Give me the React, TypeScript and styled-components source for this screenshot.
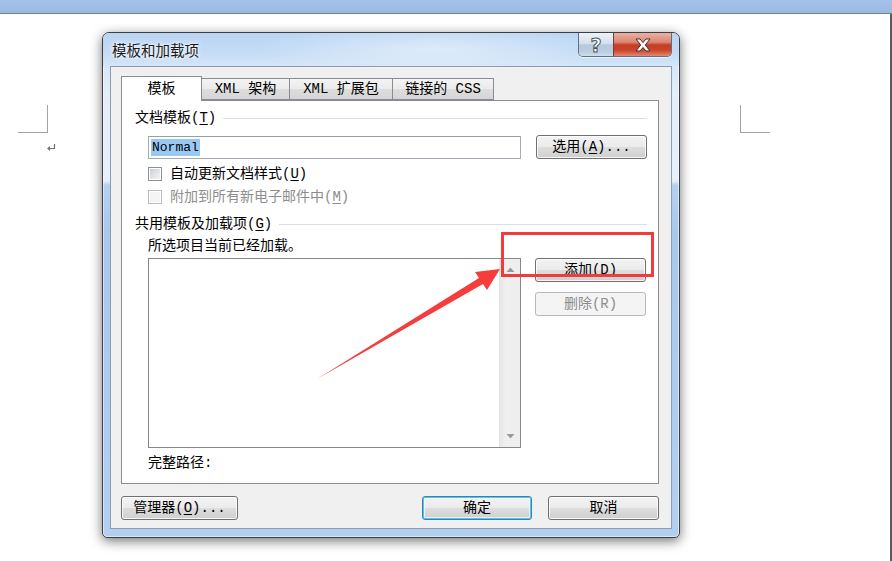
import React from "react";
import styled, { createGlobalStyle } from "styled-components";

const GlobalStyle = createGlobalStyle`
  html, body {
    margin: 0;
    padding: 0;
    background: #ffffff;
    overflow: hidden;
  }
  body {
    font-family: "Liberation Mono", "Noto Sans CJK SC", monospace;
    font-size: 14px;
    color: #000;
  }
  * {
    box-sizing: border-box;
  }
`;

const Screen = styled.div`
  position: relative;
  width: 892px;
  height: 561px;
  display: flex;
  flex-direction: column;
  background: #ffffff;
  overflow: hidden;
`;

const Ribbon = styled.div`
  height: 14px;
  flex: none;
  background: linear-gradient(#a3c1e8, #9bbbe4);
  border-bottom: 1px solid #6f7f96;
`;

const DocArea = styled.div`
  position: relative;
  flex: 1;
  background: #ffffff;
  border-right: 2px solid #525b66;
`;

const CornerMark = styled.div<{ $side: "left" | "right" }>`
  position: absolute;
  top: 91px;
  width: 30px;
  height: 28px;
  left: ${(p) => (p.$side === "left" ? "18px" : "740px")};
  border-bottom: 1px solid #a3a3a3;
  ${(p) =>
    p.$side === "left"
      ? "border-right: 1px solid #a3a3a3;"
      : "border-left: 1px solid #a3a3a3;"}
`;

const ParaMark = styled.svg`
  position: absolute;
  left: 47px;
  top: 130px;
`;

/* ---------- dialog window ---------- */

const Window = styled.div`
  position: absolute;
  left: 102px;
  top: 32px;
  width: 578px;
  height: 506px;
  display: flex;
  flex-direction: column;
  padding: 0 7px 8px 7px;
  border: 1px solid #3b3f45;
  border-radius: 7px 7px 5px 5px;
  background: linear-gradient(
    180deg,
    #bcd7f3 0px,
    #c9dff6 18px,
    #d7e7f8 34px,
    #e3eefa 60px,
    #e6f0fa 148px,
    #b5d1f0 152px,
    #a9c8ed 200px,
    #b2cfef 100%
  );
  box-shadow: 0 0 0 1px rgba(255, 255, 255, 0.5) inset,
    0 3px 12px rgba(0, 0, 0, 0.55);
`;

const TitleBar = styled.div`
  height: 33px;
  flex: none;
  display: flex;
  align-items: flex-start;
  margin: 0 -7px;
  padding: 0 7px 0 9px;
  border-radius: 6px 6px 0 0;
  background: radial-gradient(
      ellipse 180px 26px at 330px 16px,
      rgba(255, 255, 255, 0.45),
      rgba(255, 255, 255, 0)
    ),
    linear-gradient(180deg, #b9d5f3, #c4dcf5 60%, #d3e5f8);
`;

const Title = styled.div`
  margin-top: 8px;
  font-family: "Noto Sans CJK SC", sans-serif;
  font-size: 14.5px;
  line-height: 18px;
  color: #1a1a1a;
  text-shadow: 0 0 6px rgba(255, 255, 255, 0.95), 0 0 3px #fff;
`;

const CaptionGroup = styled.div`
  margin-left: auto;
  display: flex;
  height: 24px;
  border: 1px solid #5f6f86;
  border-top: none;
  border-radius: 0 0 5px 5px;
  overflow: hidden;
  box-shadow: 0 1px 0 rgba(255, 255, 255, 0.6);
`;

const CaptionButton = styled.div<{ $close?: boolean }>`
  width: ${(p) => (p.$close ? "58px" : "34px")};
  height: 100%;
  display: flex;
  align-items: center;
  justify-content: center;
  ${(p) =>
    p.$close
      ? `background: linear-gradient(180deg, #e9b0a3 0%, #dc8673 40%, #c63c24 52%, #c9452c 75%, #e08a72 100%);
         border-left: 1px solid #7a3b33;`
      : `background: linear-gradient(180deg, #edf2f8 0%, #d5e0ec 45%, #b7c8dc 52%, #bccde0 80%, #cfdcea 100%);`}
`;

const HelpGlyph = styled.span`
  font-family: "DejaVu Sans", sans-serif;
  font-weight: bold;
  font-size: 19px;
  line-height: 20px;
  color: #ffffff;
  -webkit-text-stroke: 1px #4a5566;
`;

const Client = styled.div`
  flex: 1;
  display: flex;
  flex-direction: column;
  background: #f0f0f0;
  border: 1px solid #8d9cb0;
  padding: 9px 12px 0 10px;
`;

/* ---------- tabs ---------- */

const TabRow = styled.div`
  display: flex;
  align-items: flex-end;
  height: 24px;
  position: relative;
  z-index: 2;
`;

const Tab = styled.div<{ $active?: boolean; $w: number }>`
  width: ${(p) => p.$w}px;
  height: ${(p) => (p.$active ? "25px" : "22px")};
  margin-bottom: ${(p) => (p.$active ? "-1px" : "0")};
  margin-left: ${(p) => (p.$active ? "0" : "-1px")};
  display: flex;
  align-items: center;
  justify-content: center;
  line-height: 18px;
  border: 1px solid #898c95;
  border-bottom: ${(p) => (p.$active ? "none" : "1px solid #898c95")};
  background: ${(p) =>
    p.$active ? "#ffffff" : "linear-gradient(180deg, #f3f3f3 0%, #ebebeb 50%, #dddddd 51%, #d6d6d6 100%)"};
  &:first-child {
    margin-left: 0;
  }
`;

const Panel = styled.div`
  height: 384px;
  flex: none;
  display: flex;
  flex-direction: column;
  background: #ffffff;
  border: 1px solid #898c95;
  padding: 8px 11px 0 13px;
`;

const GroupHead = styled.div<{ $mt?: number }>`
  display: flex;
  align-items: center;
  height: 18px;
  margin-top: ${(p) => p.$mt ?? 0}px;
  line-height: 18px;
  white-space: nowrap;
`;

const Rule = styled.div`
  flex: 1;
  height: 1px;
  margin-left: 7px;
  background: #d5dfe5;
`;

const Key = styled.span`
  text-decoration: underline;
  text-underline-offset: 2px;
`;

const Indented = styled.div<{ $mt: number }>`
  display: flex;
  align-items: center;
  margin-top: ${(p) => p.$mt}px;
  padding-left: 13px;
  gap: 15px;
  line-height: 18px;
  white-space: nowrap;
`;

const TextBox = styled.div`
  width: 373px;
  height: 23px;
  display: flex;
  align-items: center;
  padding-left: 2px;
  border: 1px solid #a5acb5;
  border-top-color: #9a9fa7;
  background: #fff;
`;

const Selected = styled.span`
  font-size: 13px;
  line-height: 17px;
  background: #99c9f3;
  padding: 0 1px;
`;

const Button = styled.div<{ $w: number; $default?: boolean; $disabled?: boolean }>`
  width: ${(p) => p.$w}px;
  height: 24px;
  flex: none;
  display: flex;
  align-items: center;
  justify-content: center;
  line-height: 18px;
  border-radius: 3px;
  white-space: nowrap;
  color: ${(p) => (p.$disabled ? "#8c8c8c" : "#000")};
  border: 1px solid
    ${(p) => (p.$disabled ? "#b5b9bd" : p.$default ? "#3c7fb1" : "#707070")};
  background: ${(p) =>
    p.$disabled
      ? "#f4f4f4"
      : "linear-gradient(180deg, #f3f3f3 0%, #ebebeb 48%, #dddddd 52%, #cfcfcf 100%)"};
  box-shadow: ${(p) =>
    p.$default
      ? "inset 0 0 0 1px #48c8f2, inset 0 0 0 2px rgba(255,255,255,0.6)"
      : p.$disabled
      ? "none"
      : "inset 0 0 0 1px rgba(255,255,255,0.8)"};
`;

const CheckRow = styled.div<{ $mt: number; $disabled?: boolean }>`
  display: flex;
  align-items: center;
  height: 18px;
  margin-top: ${(p) => p.$mt}px;
  padding-left: 13px;
  gap: 8px;
  line-height: 18px;
  white-space: nowrap;
  color: ${(p) => (p.$disabled ? "#8d8d8d" : "#000")};
`;

const CheckBox = styled.div<{ $disabled?: boolean }>`
  width: 14px;
  height: 14px;
  flex: none;
  border: 1px solid ${(p) => (p.$disabled ? "#bcbcbc" : "#8e8f8f")};
  background: ${(p) =>
    p.$disabled ? "#f4f4f4" : "linear-gradient(135deg, #c5c9cf 0%, #e3e5e8 55%, #f7f7f7 100%)"};
  box-shadow: inset 0 0 0 1px #ffffff;
`;

const ListRow = styled.div`
  display: flex;
  align-items: flex-start;
  margin-top: 3px;
  padding-left: 13px;
  gap: 14px;
`;

const ListBox = styled.div`
  width: 373px;
  height: 190px;
  display: flex;
  justify-content: flex-end;
  border: 1px solid #828790;
  background: #ffffff;
`;

const ScrollTrack = styled.div`
  width: 21px;
  height: 100%;
  display: flex;
  flex-direction: column;
  justify-content: space-between;
  align-items: center;
  padding: 8px 0 8px;
  background: linear-gradient(90deg, #e6e6e6, #f0f0f0 30%, #eeeeee);
  border-left: 1px solid #e2e2e2;
`;

const ButtonCol = styled.div`
  display: flex;
  flex-direction: column;
  gap: 10px;
`;

const Footer = styled.div`
  display: flex;
  align-items: center;
  margin-top: 12px;
`;

const FooterRight = styled.div`
  margin-left: auto;
  display: flex;
  gap: 16px;
`;

const Overlay = styled.svg`
  position: absolute;
  left: 0;
  top: 0;
  pointer-events: none;
`;

const Arrow: React.FC<{ up?: boolean }> = ({ up }) => (
  <svg width="9" height="5" viewBox="0 0 9 5">
    <polygon
      points={up ? "0.5,5 4.5,0.5 8.5,5" : "0.5,0 4.5,4.5 8.5,0"}
      fill="#9a9a9a"
    />
  </svg>
);

const App: React.FC = () => {
  return (
    <Screen>
      <GlobalStyle />
      <Ribbon />
      <DocArea>
        <CornerMark $side="left" />
        <CornerMark $side="right" />
        <ParaMark width="9" height="7" viewBox="0 0 9 7">
          <path d="M7.5 0 V4.5 H2" stroke="#707070" strokeWidth="1.2" fill="none" />
          <polygon points="0,4.5 3,2 3,7" fill="#707070" />
        </ParaMark>
      </DocArea>

      <Window>
        <TitleBar>
          <Title>模板和加载项</Title>
          <CaptionGroup>
            <CaptionButton>
              <HelpGlyph>?</HelpGlyph>
            </CaptionButton>
            <CaptionButton $close>
              <svg width="16" height="14" viewBox="0 0 16 14">
                <polygon
                  points="1,1 5,1 8,4.5 11,1 15,1 10.3,7 15,13 11,13 8,9.5 5,13 1,13 5.7,7"
                  fill="#ffffff"
                  stroke="#4d2a25"
                  strokeWidth="1"
                  strokeLinejoin="round"
                />
              </svg>
            </CaptionButton>
          </CaptionGroup>
        </TitleBar>

        <Client>
          <TabRow>
            <Tab $active $w={81}>模板</Tab>
            <Tab $w={89}>XML 架构</Tab>
            <Tab $w={104}>XML 扩展包</Tab>
            <Tab $w={102}>链接的 CSS</Tab>
          </TabRow>

          <Panel>
            <GroupHead>
              <span>
                文档模板(<Key>T</Key>)
              </span>
              <Rule />
            </GroupHead>
            <Indented $mt={8}>
              <TextBox>
                <Selected>Normal</Selected>
              </TextBox>
              <Button $w={111}>
                选用(<Key>A</Key>)...
              </Button>
            </Indented>
            <CheckRow $mt={6}>
              <CheckBox />
              <span>
                自动更新文档样式(<Key>U</Key>)
              </span>
            </CheckRow>
            <CheckRow $mt={5} $disabled>
              <CheckBox $disabled />
              <span>
                附加到所有新电子邮件中(<Key>M</Key>)
              </span>
            </CheckRow>
            <GroupHead $mt={9}>
              <span>
                共用模板及加载项(<Key>G</Key>)
              </span>
              <Rule />
            </GroupHead>
            <Indented $mt={4}>所选项目当前已经加载。</Indented>
            <ListRow>
              <ListBox>
                <ScrollTrack>
                  <Arrow up />
                  <Arrow />
                </ScrollTrack>
              </ListBox>
              <ButtonCol>
                <Button $w={111}>
                  添加(<Key>D</Key>)
                </Button>
                <Button $w={111} $disabled>
                  删除(R)
                </Button>
              </ButtonCol>
            </ListRow>
            <Indented $mt={6}>完整路径:</Indented>
          </Panel>

          <Footer>
            <Button $w={117}>
              管理器(<Key>O</Key>)...
            </Button>
            <FooterRight>
              <Button $w={110} $default>
                确定
              </Button>
              <Button $w={111}>取消</Button>
            </FooterRight>
          </Footer>
        </Client>
      </Window>

      <Overlay width="892" height="561" viewBox="0 0 892 561">
        <rect x="502.5" y="233.5" width="150" height="42" fill="none" stroke="#f23c3c" strokeWidth="3" />
        <polygon
          points="317,379 479,278 475,272 500,269 487,290 483,284"
          fill="#f53d3d"
        />
      </Overlay>
    </Screen>
  );
};

export default App;
